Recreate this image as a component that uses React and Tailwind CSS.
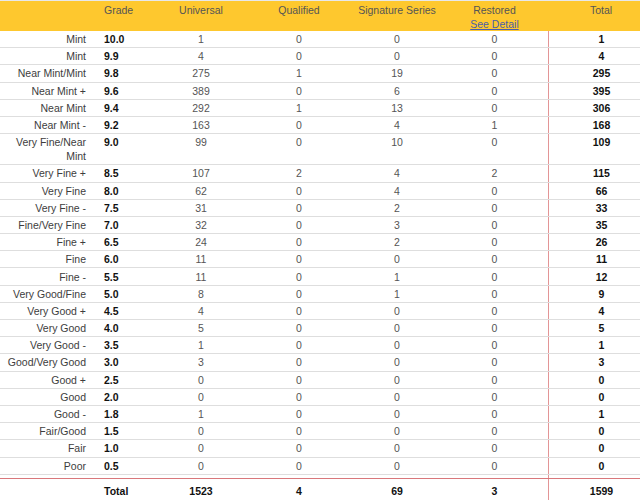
import React from "react";

const rows = [
  ["Mint", "10.0", 1, 0, 0, 0, 1],
  ["Mint", "9.9", 4, 0, 0, 0, 4],
  ["Near Mint/Mint", "9.8", 275, 1, 19, 0, 295],
  ["Near Mint +", "9.6", 389, 0, 6, 0, 395],
  ["Near Mint", "9.4", 292, 1, 13, 0, 306],
  ["Near Mint -", "9.2", 163, 0, 4, 1, 168],
  ["Very Fine/Near Mint", "9.0", 99, 0, 10, 0, 109],
  ["Very Fine +", "8.5", 107, 2, 4, 2, 115],
  ["Very Fine", "8.0", 62, 0, 4, 0, 66],
  ["Very Fine -", "7.5", 31, 0, 2, 0, 33],
  ["Fine/Very Fine", "7.0", 32, 0, 3, 0, 35],
  ["Fine +", "6.5", 24, 0, 2, 0, 26],
  ["Fine", "6.0", 11, 0, 0, 0, 11],
  ["Fine -", "5.5", 11, 0, 1, 0, 12],
  ["Very Good/Fine", "5.0", 8, 0, 1, 0, 9],
  ["Very Good +", "4.5", 4, 0, 0, 0, 4],
  ["Very Good", "4.0", 5, 0, 0, 0, 5],
  ["Very Good -", "3.5", 1, 0, 0, 0, 1],
  ["Good/Very Good", "3.0", 3, 0, 0, 0, 3],
  ["Good +", "2.5", 0, 0, 0, 0, 0],
  ["Good", "2.0", 0, 0, 0, 0, 0],
  ["Good -", "1.8", 1, 0, 0, 0, 1],
  ["Fair/Good", "1.5", 0, 0, 0, 0, 0],
  ["Fair", "1.0", 0, 0, 0, 0, 0],
  ["Poor", "0.5", 0, 0, 0, 0, 0],
];

export default function App() {
  return (
    <div
      className="w-[640px] h-[500px] overflow-hidden bg-white text-[10.5px] leading-[14px]"
      style={{ fontFamily: '"Liberation Sans", Arial, sans-serif' }}
    >
      <div className="w-[654px] border-t border-[#e8e8e8]">
        {/* Header */}
        <div className="flex h-[30px] bg-[#fec82e] text-[#555555] pt-[2px]">
          <div className="w-[95px]" />
          <div className="w-[57px] pl-[9px]">Grade</div>
          <div className="w-[98px] text-center">Universal</div>
          <div className="w-[98px] text-center">Qualified</div>
          <div className="w-[98px] text-center">Signature Series</div>
          <div className="w-[102px] pr-[5px] text-center flex flex-col items-center">
            <span>Restored</span>
            <span className="text-[#4a5fa8] underline">See Detail</span>
          </div>
          <div className="w-[106px] text-center">Total</div>
        </div>

        {/* Body */}
        {rows.map((r, i) => (
          <div key={i} className="flex border-b border-[#dedede]">
            <div className="w-[95px] pl-[4px] pr-[9px] py-[1.1px] text-right text-[#3d3d3d]">
              {r[0]}
            </div>
            <div className="w-[57px] pl-[9px] py-[1.1px] font-bold text-[#111111]">{r[1]}</div>
            <div className="w-[98px] py-[1.1px] text-center text-[#555555]">{r[2]}</div>
            <div className="w-[98px] py-[1.1px] text-center text-[#555555]">{r[3]}</div>
            <div className="w-[98px] py-[1.1px] text-center text-[#555555]">{r[4]}</div>
            <div className="w-[102px] pr-[5px] py-[1.1px] text-center text-[#555555]">{r[5]}</div>
            <div className="w-[106px] py-[1.1px] text-center font-bold text-[#111111] border-l-[1.5px] border-[#e39596]">
              {r[6]}
            </div>
          </div>
        ))}

        {/* Spacer */}
        <div className="flex h-[3px]">
          <div className="w-[548px]" />
          <div className="w-[106px] border-l-[1.5px] border-[#e39596]" />
        </div>
        <div className="h-[1.5px] bg-[#d9777b]" />

        {/* Footer */}
        <div className="flex h-[30px] pt-[5px] font-bold text-[#111111]">
          <div className="w-[95px]" />
          <div className="w-[57px] pl-[9px]">Total</div>
          <div className="w-[98px] text-center">1523</div>
          <div className="w-[98px] text-center">4</div>
          <div className="w-[98px] text-center">69</div>
          <div className="w-[102px] pr-[5px] text-center">3</div>
          <div className="w-[106px] text-center border-l-[1.5px] border-[#e39596] -mt-[5px] pt-[5px]">
            1599
          </div>
        </div>
      </div>
    </div>
  );
}
